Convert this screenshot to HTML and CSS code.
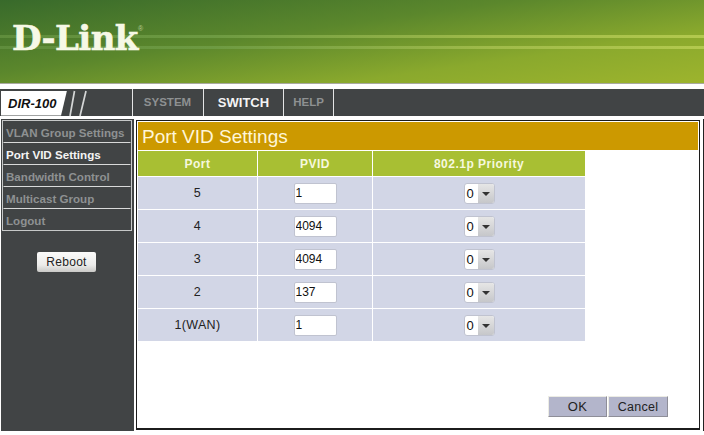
FILE: index.html
```html
<!DOCTYPE html>
<html lang="en">
<head>
    <meta charset="UTF-8" />
    <title>DIR-100 - Port VID Settings</title>
    <link rel="stylesheet" href="styles.css">
</head>
<body>
    <!-- Banner -->
    <header class="banner">
        <div class="banner-line banner-line-top"></div>
        <div class="banner-line banner-line-bottom"></div>
        <div class="logo">D-Link<sup class="logo-mark">®</sup></div>
    </header>

    <!-- Tabs -->
    <nav class="tabbar">
        <div class="model-cell">
            <span class="model">DIR-100</span>
            <svg class="slashes" width="24" height="27" viewBox="0 0 24 27">
                <path d="M5.5 1 L1 26 M17 1 L11 26" stroke="#d4d6d6" stroke-width="1.7" fill="none" />
            </svg>
        </div>
        <a href="#" class="tab tab-system">SYSTEM</a>
        <a href="#" class="tab tab-switch active">SWITCH</a>
        <a href="#" class="tab tab-help">HELP</a>
    </nav>

    <div class="page">
        <!-- Sidebar -->
        <aside class="sidebar">
            <ul class="menu">
                <li><a href="#">VLAN Group Settings</a></li>
                <li><a href="#" class="current">Port VID Settings</a></li>
                <li><a href="#">Bandwidth Control</a></li>
                <li><a href="#">Multicast Group</a></li>
                <li><a href="#">Logout</a></li>
            </ul>
            <button class="reboot">Reboot</button>
        </aside>

        <!-- Main Content -->
        <main class="content">
            <h1 class="page-title">Port VID Settings</h1>
            <table class="port-table">
                <thead>
                    <tr>
                        <th class="col-port">Port</th>
                        <th class="col-pvid">PVID</th>
                        <th class="col-prio">802.1p Priority</th>
                    </tr>
                </thead>
                <tbody>
                    <tr>
                        <td>5</td>
                        <td><input class="pvid-input" type="text" value="1"></td>
                        <td><span class="select"><span class="select-value">0</span><span class="select-arrow"></span></span></td>
                    </tr>
                    <tr>
                        <td>4</td>
                        <td><input class="pvid-input" type="text" value="4094"></td>
                        <td><span class="select"><span class="select-value">0</span><span class="select-arrow"></span></span></td>
                    </tr>
                    <tr>
                        <td>3</td>
                        <td><input class="pvid-input" type="text" value="4094"></td>
                        <td><span class="select"><span class="select-value">0</span><span class="select-arrow"></span></span></td>
                    </tr>
                    <tr>
                        <td>2</td>
                        <td><input class="pvid-input" type="text" value="137"></td>
                        <td><span class="select"><span class="select-value">0</span><span class="select-arrow"></span></span></td>
                    </tr>
                    <tr>
                        <td>1(WAN)</td>
                        <td><input class="pvid-input" type="text" value="1"></td>
                        <td><span class="select"><span class="select-value">0</span><span class="select-arrow"></span></span></td>
                    </tr>
                </tbody>
            </table>
            <div class="actions">
                <button class="action-btn btn-ok">OK</button>
                <button class="action-btn btn-cancel">Cancel</button>
            </div>
        </main>
    </div>
</body>
</html>
```

FILE: styles.css
```css
* {
    box-sizing: border-box;
    margin: 0;
    padding: 0;
}

html, body {
    height: 435px;
    overflow: hidden;
}

body {
    background: #fff;
    color: #111;
    font-family: "Liberation Sans", Arial, sans-serif;
    font-size: 12px;
}

/* Banner */
.banner {
    position: relative;
    height: 84px;
    background: linear-gradient(172deg, #386a2b 0%, #5b872c 40%, #8aa92d 72%, #9db42d 100%);
    border-bottom: 1px solid #a9a9a0;
    padding: 19px 0 0 12px;
}

.banner-line {
    position: absolute;
    left: 0;
    right: 0;
    height: 3px;
    background: linear-gradient(90deg, #5f8d3c 0%, #6d9a42 30%, #a0bb4a 70%, #b3c94e 100%);
}

.banner-line-top {
    top: 35px;
}

.banner-line-bottom {
    top: 46px;
}

.logo {
    position: relative;
    font-family: "DejaVu Serif", serif;
    font-weight: bold;
    font-size: 34px;
    line-height: 38px;
    letter-spacing: -0.6px;
    color: #f6f8e6;
    -webkit-text-stroke: 0.6px #f6f8e6;
    display: inline-block;
}

.logo-mark {
    position: absolute;
    top: 6px;
    left: 126px;
    font-family: "Liberation Sans", sans-serif;
    font-weight: normal;
    font-size: 7px;
    line-height: 8px;
    color: #b9cc96;
    -webkit-text-stroke: 0;
}

/* Tabs */
.tabbar {
    display: flex;
    height: 27px;
    margin-top: 5px;
    background: #414445;
}

.model-cell {
    width: 132px;
    display: flex;
    align-items: center;
    padding-top: 1px;
}

.model {
    width: 66px;
    height: 25px;
    margin-left: 1px;
    padding: 5px 0 0 7px;
    background: #fff;
    clip-path: polygon(0 0, 100% 0, 91% 100%, 0 100%);
    font-size: 13px;
    line-height: 16px;
    font-weight: bold;
    font-style: italic;
    color: #111;
}

.slashes {
    margin-left: 2px;
}

.tab {
    display: block;
    border-left: 1px solid #e4e5e5;
    font-size: 11.5px;
    line-height: 27px;
    font-weight: bold;
    text-align: center;
    text-decoration: none;
    color: #8e9192;
}

.tab-system {
    width: 71px;
    padding-right: 1px;
}

.tab-switch {
    width: 80px;
    font-size: 13px;
}

.tab-help {
    width: 51px;
    border-right: 1px solid #e4e5e5;
}

.tab.active {
    color: #f4f4f4;
}

.page {
    display: flex;
    align-items: flex-start;
    margin-top: 3px;
    border-right: 1px solid #222;
}

/* Sidebar */
.sidebar {
    width: 133px;
    height: 312px;
    margin-left: 1px;
    padding: 1px 1px 0;
    background: #414445;
    text-align: center;
}

.menu {
    list-style: none;
    border: 1px solid #c6c8c8;
    width: 130px;
    margin-bottom: 21px;
}

.menu li {
    height: 22px;
    border: 1px solid #414445;
    border-bottom: 1px solid #d9dada;
    text-align: left;
}

.menu li:last-child {
    border-bottom: none;
    height: 21px;
}

.menu a {
    display: block;
    padding-left: 2px;
    padding-top: 1px;
    font-size: 11.6px;
    line-height: 19px;
    font-weight: bold;
    text-decoration: none;
    color: #8e9192;
}

.menu a.current {
    color: #f4f4f4;
}

.reboot {
    display: block;
    width: 59px;
    height: 20px;
    margin-left: 35px;
    border: none;
    border-radius: 2px;
    background: linear-gradient(180deg, #fbfbfa 0%, #ececea 65%, #c9c9c6 100%);
    font-family: "Liberation Sans", Arial, sans-serif;
    font-size: 12px;
    letter-spacing: 0.3px;
    color: #222;
}

/* Main Content */
.content {
    position: relative;
    width: 564px;
    height: 310px;
    margin-left: 2px;
    margin-top: 1px;
    border: 1px solid #1c1c1c;
    border-bottom-width: 2px;
    padding: 1px;
}

.page-title {
    height: 28px;
    background: #cc9900;
    color: #fff6d8;
    padding-left: 4px;
    font-size: 19px;
    line-height: 30px;
    font-weight: normal;
}

.port-table {
    border-collapse: separate;
    border-spacing: 0;
    table-layout: fixed;
    width: 447px;
    border-top: 1px solid #fff;
}

.port-table th {
    height: 26px;
    background: #a8bf33;
    color: #f6f8df;
    font-size: 12px;
    font-weight: bold;
    letter-spacing: 0.5px;
    border-right: 1px solid #fff;
    border-bottom: 1px solid #fff;
}

.port-table td {
    height: 33px;
    background: #d2d6e6;
    color: #222;
    text-align: center;
    font-size: 12.5px;
    letter-spacing: 0.3px;
    border-right: 1px solid #fff;
    border-bottom: 1px solid #fff;
}

.port-table th:last-child,
.port-table td:last-child {
    border-right: none;
}

.port-table tr:last-child td {
    border-bottom: none;
    height: 32px;
}

.col-port {
    width: 120px;
}

.col-pvid {
    width: 115px;
}

.col-prio {
    width: 212px;
}

.pvid-input {
    display: block;
    width: 43px;
    height: 21px;
    margin: 0 auto;
    padding: 0 1px;
    border: 1px solid #c0c3d0;
    border-radius: 2px;
    background: #fff;
    font-family: "Liberation Sans", Arial, sans-serif;
    font-size: 12px;
    color: #111;
    text-align: left;
    outline: none;
}

.select {
    display: inline-flex;
    vertical-align: middle;
    width: 31px;
    height: 21px;
    border: 1px solid #c0c3d0;
    border-radius: 3px;
    overflow: hidden;
    background: #fff;
}

.select-value {
    width: 13px;
    padding-left: 2px;
    line-height: 19px;
    text-align: left;
    font-family: "Liberation Sans", Arial, sans-serif;
    font-size: 13px;
    color: #111;
}

.select-arrow {
    position: relative;
    flex: 1;
    background: linear-gradient(180deg, #e6e6e6, #c6c7ca);
}

.select-arrow::after {
    content: '';
    position: absolute;
    top: 8px;
    left: 4px;
    border-left: 4px solid transparent;
    border-right: 4px solid transparent;
    border-top: 4px solid #333;
}

.actions {
    position: absolute;
    right: 31px;
    bottom: 11px;
    display: flex;
    gap: 1px;
}

.action-btn {
    height: 21px;
    border: 1px solid #8e8e98;
    border-top-color: #ecece4;
    border-left-color: #ecece4;
    background: #b3b5cb;
    font-family: "Liberation Sans", Arial, sans-serif;
    font-size: 12.5px;
    letter-spacing: 0.3px;
    color: #222;
}

.btn-ok {
    width: 59px;
    font-size: 13px;
}

.btn-cancel {
    width: 60px;
}
```
